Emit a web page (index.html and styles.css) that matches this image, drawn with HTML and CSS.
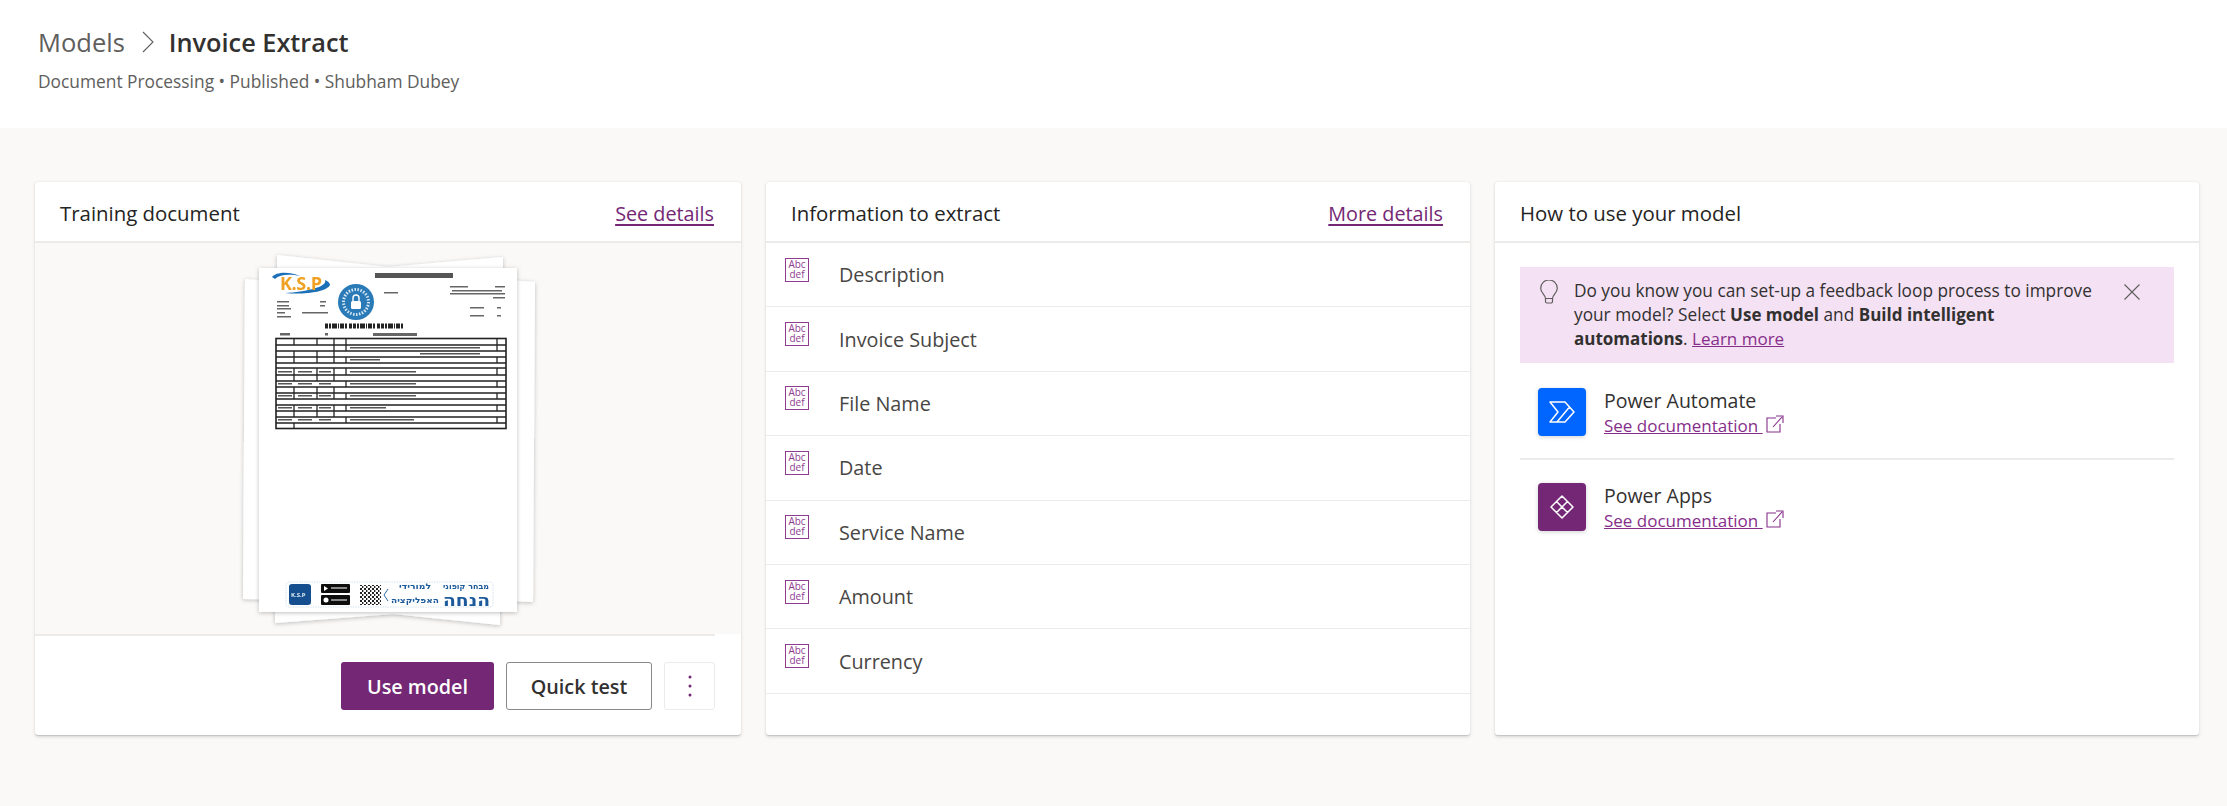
FILE: index.html
```html
<!DOCTYPE html>
<html lang="en">
<head>
<meta charset="utf-8">
<title>Invoice Extract</title>
<link rel="stylesheet" href="styles.css">
</head>
<body>
<header class="top">
  <div class="crumbs">
    <span class="crumb">Models</span>
    <svg class="chev" viewBox="0 0 12 22"><path d="M1 1l10 10L1 21" fill="none" stroke="#605e5c" stroke-width="1.1"/></svg>
    <h1 class="title">Invoice Extract</h1>
  </div>
  <p class="meta">Document Processing • Published • Shubham Dubey</p>
</header>
<main class="cards">
  <section class="card">
    <div class="card-head"><h2>Training document</h2><a class="link" href="#">See details</a></div>
    <div class="thumb">
      <svg class="doc" viewBox="218 243 340 391" width="340" height="391">
        <defs>
          <filter id="sh" x="-10%" y="-10%" width="120%" height="120%"><feDropShadow dx="0" dy="1" stdDeviation="2.200" flood-color="#000" flood-opacity=".25"/></filter>
          <filter id="soft" x="-2%" y="-2%" width="104%" height="104%"><feGaussianBlur stdDeviation=".35"/></filter>
          <pattern id="qr" width="4" height="4" patternUnits="userSpaceOnUse"><rect width="4" height="4" fill="#fff"/><rect width="2" height="2" fill="#222"/><rect x="2" y="2" width="1.400" height="2" fill="#222"/></pattern>
        </defs>
        <g fill="#fff" filter="url(#sh)">
          <polygon points="277,255 388,267 503,257 503,300 277,300"/>
          <polygon points="245,279 300,283 300,600 243,599"/>
          <polygon points="535,282 480,278 480,600 533,602"/>
          <polygon points="275,623 393,614 500,625 500,590 275,590"/>
        </g>
        <rect x="259" y="268" width="258" height="344" fill="#fff" filter="url(#sh)"/>
        <g filter="url(#soft)">
          <path d="M272 277c4-5 16-6 28-1-10-2-20-2-25 3zM285 293c18 2 42-1 45-8 0-2-2-4-5-5 3 7-20 12-40 13z" fill="#1c6fb8"/>
          <text class="ksp" x="280" y="290" textLength="42">K.S.P</text>
          <rect x="375" y="273" width="78" height="5" fill="#555"/>
          <circle cx="356" cy="302" r="18" fill="#2a7ab8"/>
          <circle cx="356" cy="302" r="12.500" fill="none" stroke="#d8e8f4" stroke-width="3" stroke-dasharray="1.500 1.500"/>
          <rect x="351" y="301" width="10" height="8" rx="1.500" fill="#fff"/>
          <path d="M353 301v-3a3 3 0 0 1 6 0v3" fill="none" stroke="#fff" stroke-width="1.400"/>
          <g fill="#666">
            <rect x="450" y="286" width="18" height="1.500"/><rect x="495" y="286" width="10" height="1.500"/>
            <rect x="452" y="290" width="50" height="1.500"/><rect x="450" y="293" width="55" height="1.500"/>
            <rect x="493" y="297" width="12" height="1.500"/><rect x="384" y="292" width="14" height="1.500"/>
            <rect x="277" y="301" width="12" height="1.500"/><rect x="320" y="301" width="6" height="1.500"/>
            <rect x="277" y="305" width="12" height="1.500"/><rect x="320" y="305" width="5" height="1.500"/>
            <rect x="277" y="308" width="14" height="1.500"/>
            <rect x="277" y="312" width="8" height="1.500"/><rect x="302" y="312" width="26" height="1.500"/>
            <rect x="277" y="316" width="14" height="1.500"/>
            <rect x="470" y="307" width="14" height="1.500"/><rect x="497" y="307" width="4" height="1.500"/>
            <rect x="470" y="315" width="14" height="1.500"/><rect x="497" y="315" width="4" height="1.500"/>
            <rect x="280" y="333" width="10" height="2.500"/><rect x="325" y="333" width="3" height="2.500"/>
            <rect x="373" y="333" width="44" height="3"/>
          </g>
          <line x1="325" y1="326" x2="405" y2="326" stroke="#222" stroke-width="5" stroke-dasharray="3 1 2 1 5 1 1 1 4 1 2 2 3 1"/>
          <g fill="none" stroke="#222" stroke-width="1.300">
            <rect x="276" y="338.500" width="230" height="90" stroke-width="1.600"/>
            <path d="M276 345H506M276 351H506M276 357H506M276 363H506M276 368H506M276 375H506M276 381H506M276 387H506M276 393H506M276 399H506M276 405H506M276 411H506M276 417H506M276 423H506"/>
            <path d="M294 338V345M294 351V363M294 368V381M294 387V399M294 405V417M294 423V428M317 338V345M317 351V363M317 368V381M317 387V399M317 405V417M334 338V363M334 368V381M334 387V399M334 405V417M346 338V351M346 357V363M346 368V375M346 381V387M346 393V399M346 405V411M346 417V423M497 338V351M497 357V363M497 368V375M497 381V387M497 393V399M497 405V411M497 417V423"/>
          </g>
          <g fill="#555">
            <rect x="350" y="347" width="130" height="1.500"/><rect x="420" y="353" width="60" height="1.500"/>
            <rect x="350" y="359" width="30" height="1.500"/>
            <rect x="350" y="371" width="66" height="1.500"/><rect x="350" y="383" width="66" height="1.500"/><rect x="350" y="395" width="66" height="1.500"/>
            <rect x="350" y="407" width="36" height="1.500"/><rect x="350" y="419" width="64" height="1.500"/>
            <rect x="278" y="371" width="14" height="1.500"/><rect x="298" y="371" width="14" height="1.500"/><rect x="319" y="371" width="12" height="1.500"/>
            <rect x="278" y="383" width="14" height="1.500"/><rect x="298" y="383" width="14" height="1.500"/><rect x="319" y="383" width="12" height="1.500"/>
            <rect x="278" y="395" width="14" height="1.500"/><rect x="298" y="395" width="14" height="1.500"/><rect x="319" y="395" width="12" height="1.500"/>
            <rect x="278" y="407" width="14" height="1.500"/><rect x="298" y="407" width="14" height="1.500"/><rect x="319" y="407" width="12" height="1.500"/>
            <rect x="278" y="419" width="14" height="1.500"/><rect x="298" y="419" width="14" height="1.500"/><rect x="319" y="419" width="12" height="1.500"/>
          </g>
          <rect x="286" y="582" width="207" height="25" rx="3" fill="none" stroke="#c9dbea" stroke-width=".8" stroke-dasharray="1.500 1"/>
          <rect x="289" y="584" width="22" height="21" rx="3" fill="#15508f"/>
          <text class="ksp-small" x="291" y="597">K.S.P</text>
          <rect x="321" y="584" width="29" height="9" rx="1" fill="#111"/>
          <rect x="321" y="595" width="29" height="10" rx="1" fill="#111"/>
          <path d="M324 586l4 2.500-4 2.500z" fill="#fff"/><circle cx="326" cy="600" r="2.500" fill="#fff"/>
          <rect x="331" y="587" width="16" height="2" fill="#888"/><rect x="331" y="599" width="16" height="2" fill="#888"/>
          <rect x="360" y="585" width="21" height="20" fill="url(#qr)"/>
          <path d="M388 589l-4 6 4 6" fill="none" stroke="#2a6aa8" stroke-width="1"/>
          <text class="he" x="431" y="589" textLength="32" lengthAdjust="spacingAndGlyphs" direction="rtl" text-anchor="start">למורידי</text>
          <text class="he" x="439" y="603" textLength="48" lengthAdjust="spacingAndGlyphs" direction="rtl" text-anchor="start">האפליקציה</text>
          <text class="he" x="489" y="588.500" textLength="46" lengthAdjust="spacingAndGlyphs" direction="rtl" text-anchor="start">מבחר קופוני</text>
          <text class="he-big" x="490" y="605.500" textLength="47" lengthAdjust="spacingAndGlyphs" direction="rtl" text-anchor="start">הנחה</text>
        </g>
      </svg>
    </div>
    <div class="actions">
      <button class="btn primary">Use model</button>
      <button class="btn secondary">Quick test</button>
      <button class="btn more" aria-label="More"><svg viewBox="0 0 4 24" width="4" height="24"><g fill="#742774"><circle cx="2" cy="3" r="1.500"/><circle cx="2" cy="12" r="1.500"/><circle cx="2" cy="21" r="1.500"/></g></svg></button>
    </div>
  </section>

  <section class="card">
    <div class="card-head"><h2>Information to extract</h2><a class="link" href="#">More details</a></div>
    <ul class="fields">
      <li class="field"><span class="abc">Abc<br>def</span><span>Description</span></li>
      <li class="field"><span class="abc">Abc<br>def</span><span>Invoice Subject</span></li>
      <li class="field"><span class="abc">Abc<br>def</span><span>File Name</span></li>
      <li class="field"><span class="abc">Abc<br>def</span><span>Date</span></li>
      <li class="field"><span class="abc">Abc<br>def</span><span>Service Name</span></li>
      <li class="field"><span class="abc">Abc<br>def</span><span>Amount</span></li>
      <li class="field"><span class="abc">Abc<br>def</span><span>Currency</span></li>
    </ul>
  </section>

  <section class="card">
    <div class="card-head"><h2>How to use your model</h2></div>
    <div class="use-body">
      <div class="banner">
        <svg class="bulb" viewBox="0 0 18 24" width="18" height="24"><path d="M5.500 18.500c0-3.500-4.800-5.500-4.800-10.200a8.300 8.300 0 0 1 16.600 0c0 4.700-4.800 6.700-4.800 10.200zM5.500 18.500v3a1.500 1.500 0 0 0 1.500 1.500h4a1.500 1.500 0 0 0 1.500-1.500v-3" fill="none" stroke="#605e5c" stroke-width="1.200"/></svg>
        <p class="banner-text">Do you know you can set-up a feedback loop process to improve<br>your model? Select <b>Use model</b> and <b>Build intelligent</b><br><b>automations</b>. <a class="inline-link" href="#">Learn more</a></p>
        <svg class="close" viewBox="0 0 16 16" width="16" height="16"><path d="M.5.500l15 15M15.500.500l-15 15" fill="none" stroke="#605e5c" stroke-width="1.100"/></svg>
      </div>
      <div class="app">
        <span class="app-icon blue"><svg viewBox="0 0 26 22" width="26" height="22"><path d="M1 1h15l9 10-9 10H1l8-10zM20.500 6L8 21" fill="none" stroke="#fff" stroke-width="1.500" stroke-linejoin="round"/></svg></span>
        <div class="app-text"><div class="app-name">Power Automate</div><a class="doc-link" href="#">See documentation <svg class="ext" viewBox="0 0 18 18" width="18" height="18"><path d="M10 3H1v14h13V9M7 12L16 2M10 1h7v7" fill="none" stroke="#862e8a" stroke-width="1.100"/></svg></a></div>
      </div>
      <div class="app last">
        <span class="app-icon purple"><svg viewBox="0 0 24 24" width="24" height="24"><path d="M12 1l11 11-11 11L1 12zM12 1L6.500 6.500l11 11M17.500 6.500l-11 11" fill="none" stroke="#fff" stroke-width="1.500" stroke-linejoin="round"/></svg></span>
        <div class="app-text"><div class="app-name">Power Apps</div><a class="doc-link" href="#">See documentation <svg class="ext" viewBox="0 0 18 18" width="18" height="18"><path d="M10 3H1v14h13V9M7 12L16 2M10 1h7v7" fill="none" stroke="#862e8a" stroke-width="1.100"/></svg></a></div>
      </div>
    </div>
  </section>
</main>
</body>
</html>
```

FILE: styles.css
```css
* { box-sizing: border-box; }
html, body { margin: 0; height: 100%; }
body {
  background: #faf9f8;
  color: #323130;
  font-family: "Open Sans", "Liberation Sans", sans-serif;
  overflow: hidden;
}
h1, h2, p, ul { margin: 0; padding: 0; }

.top { background: #fff; height: 128px; padding: 24px 38px 0; }
.crumbs { display: flex; align-items: center; height: 36px; }
.crumb { font-size: 25.500px; color: #605e5c; }
.chev { width: 12px; height: 22px; margin: 0 15px 0 17px; }
.title { font-size: 25.300px; font-weight: 600; color: #323130; }
.meta { margin-top: 9px; font-size: 17.350px; color: #605e5c; }

.cards {
  display: grid;
  grid-template-columns: 706px 704px 704px;
  column-gap: 25px;
  padding: 54px 0 0 35px;
}
.card {
  background: #fff;
  height: 553px;
  border-radius: 3px;
  box-shadow: 0 1.600px 3.600px rgba(0,0,0,.14), 0 .3px .9px rgba(0,0,0,.11);
  display: flex;
  flex-direction: column;
}
.card-head {
  flex: none;
  height: 61px;
  padding: 3px 27px 0 25px;
  display: flex;
  align-items: center;
  justify-content: space-between;
  border-bottom: 2px solid #edebe9;
}
.card-head h2 { font-size: 20.400px; font-weight: 500; color: #252423; }
.link { font-size: 19.800px; color: #742774; text-decoration-thickness: 2px; text-underline-offset: 3px; }

.thumb {
  flex: none;
  height: 391px;
  background: #faf9f8;
  display: flex;
  justify-content: center;
}
.doc { display: block; }
.ksp { font: 700 18px "Open Sans", sans-serif; fill: #f0a020; }
.ksp-small { font: 700 6px "Open Sans", sans-serif; fill: #dfe9f3; }
.he { font: 700 8px "DejaVu Sans", sans-serif; fill: #1b5a9c; }
.he-big { font: 700 16px "DejaVu Sans", sans-serif; fill: #1b5a9c; }

.actions {
  flex: 1;
  margin-right: 26px;
  border-top: 2px solid #edebe9;
  padding-top: 26px;
  display: flex;
  justify-content: flex-end;
  align-items: flex-start;
  gap: 12px;
}
.btn {
  height: 48px;
  border-radius: 3px;
  font: 600 19.800px "Open Sans", sans-serif;
  padding: 0;
}
.primary { width: 153px; background: #742774; color: #fff; border: 0; }
.secondary { width: 146px; background: #fff; color: #323130; border: 1px solid #8a8886; }
.more { width: 51px; background: #fff; border: 1px solid #edebe9; display: flex; align-items: center; justify-content: center; }

.fields { list-style: none; }
.field {
  height: 64.400px;
  display: flex;
  align-items: center;
  padding: 0 0 0 19px;
  border-bottom: 1px solid #edebe9;
  font-size: 19.800px;
  color: #484644;
}
.abc {
  flex: none;
  width: 24px;
  height: 24px;
  margin: -10px 30px 0 0;
  border: 1.500px solid #8e3b90;
  color: #8e3b90;
  font-size: 10px;
  line-height: 10px;
  text-align: center;
  overflow: hidden;
}

.use-body { padding: 24px 25px 0 25px; }
.banner {
  display: flex;
  align-items: flex-start;
  background: #f4e1f4;
  height: 96px;
  padding: 12px 0 0 20px;
}
.bulb { flex: none; margin: 1px 16px 0 0; }
.banner-text { width: 520px; font-size: 17.250px; line-height: 24px; color: #323130; white-space: nowrap; }
.banner-text b { font-weight: 700; font-size: 17px; }
.inline-link { color: #862e8a; font-size: 17px; }
.close { flex: none; margin: 5px 0 0 30px; }
.app {
  display: flex;
  align-items: flex-start;
  height: 97px;
  padding: 25px 0 0 18px;
  border-bottom: 2px solid #edebe9;
}
.app.last { border-bottom: 0; height: auto; padding-top: 23px; }
.app-icon {
  flex: none;
  width: 48px;
  height: 48px;
  border-radius: 4px;
  display: flex;
  align-items: center;
  justify-content: center;
  box-shadow: 0 1px 4px rgba(0,0,0,.18);
}
.blue { background: #0066ff; }
.purple { background: #742774; }
.app-text { margin-left: 18px; margin-top: -1px; }
.app-name { font-size: 19.500px; line-height: 28px; color: #323130; }
.doc-link { display: flex; align-items: center; gap: 0; font-size: 17px; line-height: 22px; color: #862e8a; text-decoration: underline; white-space: pre; }
.ext { margin-left: 3px; margin-top: -4px; }
```
